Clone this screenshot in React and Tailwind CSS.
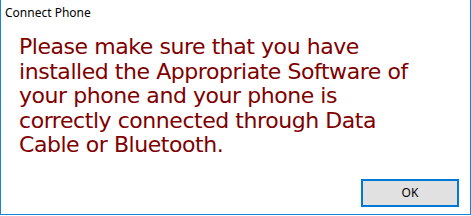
const LINES = [
  "Please make sure that you have",
  "installed the Appropriate Software of",
  "your phone and your phone is",
  "correctly connected through Data",
  "Cable or Bluetooth.",
];

export default function App() {
  return (
    <div className="w-[471px] h-[216px] bg-white">
      <div className="h-[215px] flex flex-col border-x border-b border-[#1883d7] bg-white">
        <div className="h-[26px] pl-[4px] pt-[5px] text-[12px] leading-[16px] text-black font-['Segoe_UI','Noto_Sans',sans-serif]">
          Connect Phone
        </div>
        <p className="pl-[18px] pt-[9px] text-[22px] leading-[24.5px] tracking-[-0.45px] text-[#800000] font-['DejaVu_Sans',sans-serif] whitespace-nowrap">
          {LINES.map((line) => (
            <span key={line} className="block">
              {line}
            </span>
          ))}
        </p>
        <div className="mt-auto flex justify-end pr-[11px] pb-[7px]">
          <button className="w-[98px] h-[28px] border-2 border-[#0078d7] bg-[#e1e1e1] text-[12px] text-black font-['Noto_Sans',sans-serif]">
            OK
          </button>
        </div>
      </div>
    </div>
  );
}
